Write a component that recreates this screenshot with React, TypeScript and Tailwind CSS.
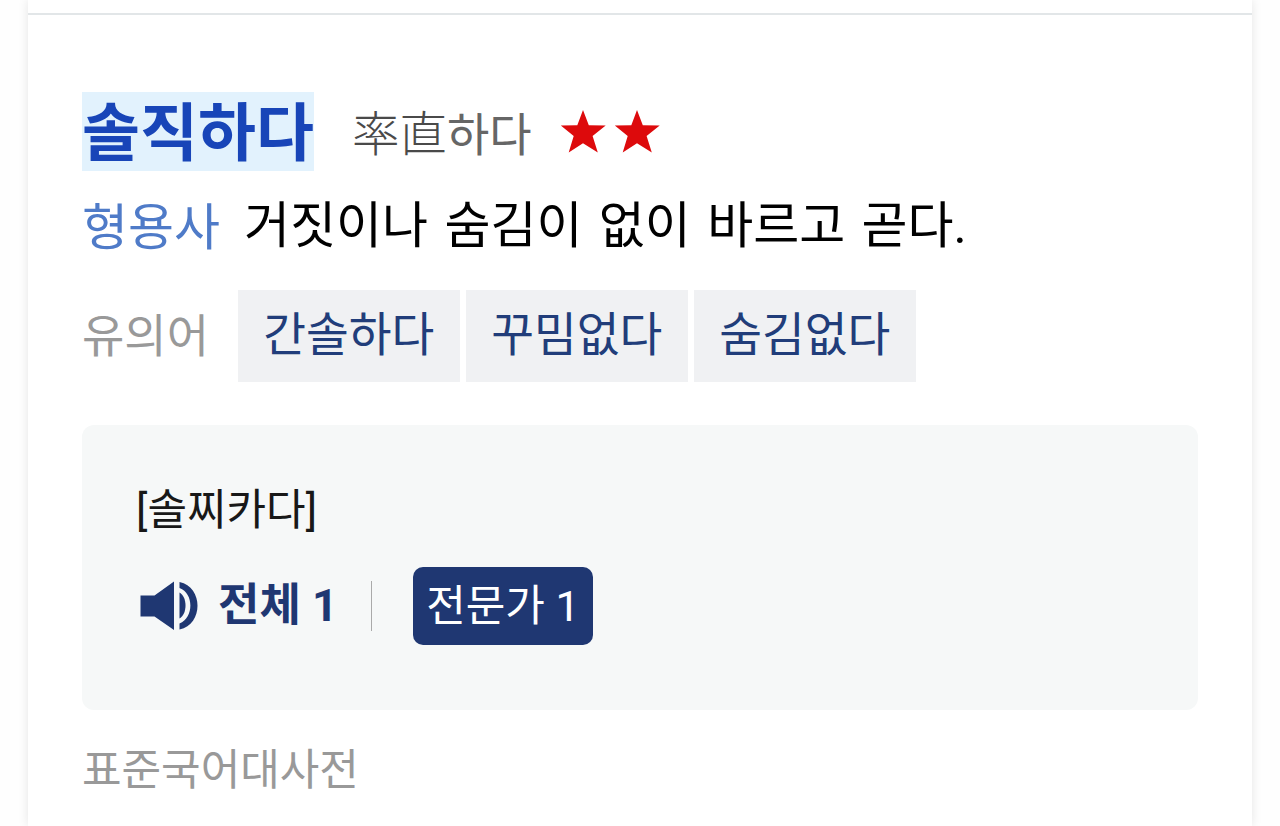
const synonyms = ["간솔하다", "꾸밈없다", "숨김없다"];

function Star() {
  return (
    <svg viewBox="0 0 46 44" className="h-11 w-[46px] fill-[#dd0a0c]">
      <path d="M23 0 L28.8 15.2 L45.7 15.5 L32.6 26 L37.8 42.5 L23 33.2 L8.7 42.5 L13.7 26 L0.8 15.5 L17.3 15.2 Z" />
    </svg>
  );
}

function Speaker() {
  return (
    <svg viewBox="0 0 58 50" className="h-[50px] w-[58px] fill-[#1f3772]">
      <path d="M0.5 14.5 H14.5 L34 0.5 V49 L14.5 35.5 H0.5 Z" />
      <path d="M39.5 11.5 C47.5 16 47.5 33 39.5 37.5 Z" />
      <path d="M39.5 1 C63.5 6 63.5 43.5 39.5 48.5 V42.5 C54 37 54 12 39.5 7 Z" />
    </svg>
  );
}

export default function App() {
  return (
    <div className="h-[826px] overflow-hidden bg-[#fefefe] px-7 font-['Roboto','Noto_Sans_CJK_KR',sans-serif]">
      <main className="flex h-full w-[1224px] flex-col bg-white shadow-[0_0_10px_rgba(0,0,0,0.1)]">
        <div className="h-[15px] shrink-0 border-b-2 border-[#e2e6e8]" />
        <div className="flex flex-col px-[54px] pt-[77px]">
          <div className="flex h-[79px] items-center">
            <h1 className="h-[79px] w-[232px] whitespace-nowrap bg-[#e2f2fd] text-[63px] leading-[83px] font-bold text-[#1845b8]">솔직하다</h1>
            <span className="ml-[38px] w-[181px] whitespace-nowrap pt-[7px] text-[46px] leading-[84px] text-[#666]">
              <span className="font-['Noto_Sans_CJK_KR'] text-[47.5px] leading-none font-light text-[#4a4a4a]">率直</span>하다
            </span>
            <div className="ml-[27px] flex gap-2"><Star /><Star /></div>
          </div>
          <div className="mt-[15px] flex h-[80px] whitespace-nowrap text-[50px] leading-[80px]">
            <span className="w-[162px] pt-[2px] text-[#4f7bc8]">형용사</span>
            <p className="text-black [word-spacing:4px]">거짓이나 숨김이 없이 바르고 곧다.</p>
          </div>
          <div className="mt-6 flex h-[92px] items-center whitespace-nowrap">
            <span className="w-[156px] text-[46px] leading-[92px] text-[#999]">유의어</span>
            <div className="flex gap-[6.5px]">
              {synonyms.map((word) => (
                <a key={word} className="h-[92px] w-[221.5px] bg-[#f0f1f3] text-center text-[46.5px] leading-[90px] text-[#213d7a]">{word}</a>
              ))}
            </div>
          </div>
          <section className="mt-[43px] h-[285px] rounded-xl bg-[#f6f8f8] px-[54px] pt-[50px]">
            <p className="h-[68px] text-[43px] leading-[70px] text-[#181818]">[솔찌카다]</p>
            <div className="mt-6 flex h-[78px] items-center whitespace-nowrap">
              <div className="ml-1"><Speaker /></div>
              <span className="ml-5 w-[153px] text-[45px] leading-[74px] font-bold text-[#1f3772]">전체 1</span>
              <span className="h-[50px] w-px bg-[#aaa]" />
              <button className="ml-[41px] h-[78px] w-[180px] rounded-[10px] bg-[#1f3772] text-[43px] leading-[78px] text-white">전문가 1</button>
            </div>
          </section>
          <p className="mt-[25px] h-[68px] text-[43px] leading-[70px] text-[#999]">표준국어대사전</p>
        </div>
      </main>
    </div>
  );
}
